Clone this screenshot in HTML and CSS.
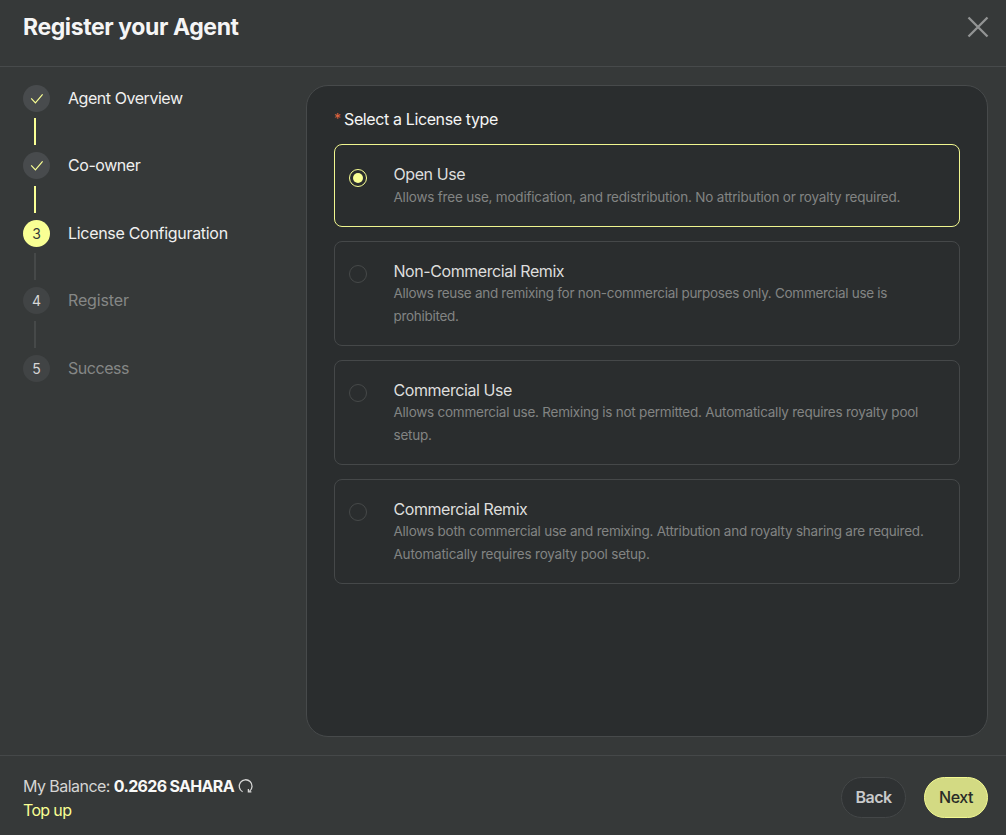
FILE: index.html
```html
<!DOCTYPE html>
<html lang="en">
<head>
<meta charset="utf-8">
<title>Register your Agent</title>
<link rel="stylesheet" href="styles.css">
</head>
<body>
<div class="modal">
  <header class="header">
    <h1 class="title">Register your Agent</h1>
    <svg class="close" width="22" height="22" viewBox="0 0 22 22"><path d="M1.5 1.5 20.5 20.5M20.5 1.5 1.5 20.5"/></svg>
  </header>
  <main class="main">
    <ol class="steps">
      <li class="step done"><span class="dot"><svg width="14" height="12" viewBox="0 0 14 12"><path d="M1.2 5.4 5.4 9.8 12.6 1.4"/></svg></span><span class="label">Agent Overview</span></li>
      <li class="step done"><span class="dot"><svg width="14" height="12" viewBox="0 0 14 12"><path d="M1.2 5.4 5.4 9.8 12.6 1.4"/></svg></span><span class="label">Co-owner</span></li>
      <li class="step current"><span class="dot">3</span><span class="label wide">License Configuration</span></li>
      <li class="step"><span class="dot">4</span><span class="label wider">Register</span></li>
      <li class="step"><span class="dot">5</span><span class="label">Success</span></li>
    </ol>
    <section class="panel">
      <h2 class="field"><span class="required">*</span><span>Select a License type</span></h2>
      <div class="options">
        <div class="card selected">
          <span class="radio"></span>
          <div class="copy"><h3 class="name">Open Use</h3><p class="desc loose">Allows free use, modification, and redistribution. No attribution or royalty required.</p></div>
        </div>
        <div class="card">
          <span class="radio"></span>
          <div class="copy"><h3 class="name">Non-Commercial Remix</h3><p class="desc tight">Allows reuse and remixing for non-commercial purposes only. Commercial use is<br>prohibited.</p></div>
        </div>
        <div class="card">
          <span class="radio"></span>
          <div class="copy"><h3 class="name">Commercial Use</h3><p class="desc">Allows commercial use. Remixing is not permitted. Automatically requires royalty pool<br>setup.</p></div>
        </div>
        <div class="card">
          <span class="radio"></span>
          <div class="copy"><h3 class="name">Commercial Remix</h3><p class="desc">Allows both commercial use and remixing. Attribution and royalty sharing are required.<br><span class="loose">Automatically requires royalty pool setup.</span></p></div>
        </div>
      </div>
    </section>
  </main>
  <footer class="footer">
    <div class="wallet">
      <div class="balance"><span class="caption">My Balance:</span><strong class="amount">0.2626 SAHARA</strong><svg class="refresh" width="16" height="16" viewBox="0 0 16 16"><path d="M4.6 13.8A6.4 6.4 0 1 1 11.6 13.2M10.4 10.9V13.9H13.4"/></svg></div>
      <a class="topup">Top up</a>
    </div>
    <div class="actions"><button class="btn back">Back</button><button class="btn next">Next</button></div>
  </footer>
</div>
</body>
</html>
```
FILE: styles.css
```css
* { box-sizing: border-box; margin: 0; padding: 0; }
body { background: #363939; color: #f5f5f5; font-family: Inter, "Liberation Sans", sans-serif; font-size: 16px; }
.modal { width: 1006px; height: 835px; display: flex; flex-direction: column; white-space: nowrap; }
svg { display: block; fill: none; flex: none; }
.header { height: 67px; flex: none; border-bottom: 1px solid #474a4b; display: flex; justify-content: space-between; padding: 12px 17px 0 23px; }
.title { font-size: 23px; line-height: 30px; font-weight: 700; letter-spacing: -0.4px; }
.close { margin-top: 4px; stroke: #929494; stroke-width: 2.3; }
.main { height: 688px; flex: none; display: flex; padding: 18px 18px 18px 23px; }
.steps { width: 283px; list-style: none; }
.step { height: 67.4px; display: grid; grid-template-columns: 27px 1fr; column-gap: 18px; grid-template-rows: 27px 27px; row-gap: 6.4px; }
.step:not(:last-child)::after { content: ""; width: 2px; height: 27px; margin-left: 11px; background: #464949; }
.step.done::after { background: #f9ff94; }
.dot { width: 27px; height: 27px; border-radius: 50%; background: #414445; display: flex; align-items: center; justify-content: center; font-size: 14px; color: #d7d7d6; }
.done .dot { background: #484b4d; }
.current .dot { background: #f9ff94; color: #363939; }
.dot svg { stroke: #f9ff94; stroke-width: 1.2; }
.label { color: #858786; line-height: 26px; letter-spacing: -0.45px; }
.label.wide { letter-spacing: -0.3px; }
.label.wider { letter-spacing: -0.15px; }
.done .label, .current .label { color: #f0f0ef; }
.panel { width: 682px; height: 652px; border: 1px solid #474a4b; border-radius: 22px; background: #2a2d2e; padding: 21px 27px 0; }
.field { display: flex; gap: 3px; font-size: 16px; font-weight: 400; line-height: 24px; letter-spacing: -0.38px; margin-bottom: 13px; }
.required { color: #e2653e; font-size: 14px; letter-spacing: 0; }
.options { display: flex; flex-direction: column; gap: 14px; }
.card { height: 105px; border: 1px solid #454849; border-radius: 8px; display: flex; gap: 26.5px; padding: 18px 14px 0; }
.card.selected { height: 83px; border-color: #f0f68f; }
.radio { width: 18px; height: 18px; flex: none; margin-top: 5px; border: 1px solid #464949; border-radius: 50%; display: flex; align-items: center; justify-content: center; }
.selected .radio { border-color: #f9ff94; margin-top: 6px; }
.selected .radio::before { content: ""; width: 10px; height: 10px; border-radius: 50%; background: #f9ff94; }
.name { font-size: 16px; font-weight: 400; line-height: 22px; color: #dededd; letter-spacing: -0.43px; }
.selected .name { line-height: 23px; }
.desc { font-size: 13.5px; line-height: 23px; color: #828483; letter-spacing: -0.235px; }
.loose { letter-spacing: -0.2px; }
.tight { letter-spacing: -0.29px; }
.footer { flex: 1; border-top: 1px solid #454849; display: flex; justify-content: space-between; padding: 18px 18px 0 23px; }
.wallet { line-height: 24px; letter-spacing: -0.55px; }
.balance { display: flex; align-items: center; color: #d5d5d4; }
.caption { margin-right: 4px; }
.amount { color: #f8f8f7; font-weight: 700; letter-spacing: -0.68px; }
.refresh { margin-left: 4px; stroke: #d7d7d6; stroke-width: 1.3; }
.topup { display: block; color: #f9ff94; letter-spacing: -0.65px; }
.actions { display: flex; gap: 18px; padding-top: 3px; }
.btn { height: 41px; border-radius: 21px; padding-bottom: 2px; font: 600 16px Inter, "Liberation Sans", sans-serif; letter-spacing: -0.5px; }
.back { width: 65px; background: #2f3233; border: 1px solid #444748; color: #c9cacb; }
.next { width: 64px; background: #d3da83; border: 1px solid #f3f991; color: #292c27; font-weight: 500; }
```
